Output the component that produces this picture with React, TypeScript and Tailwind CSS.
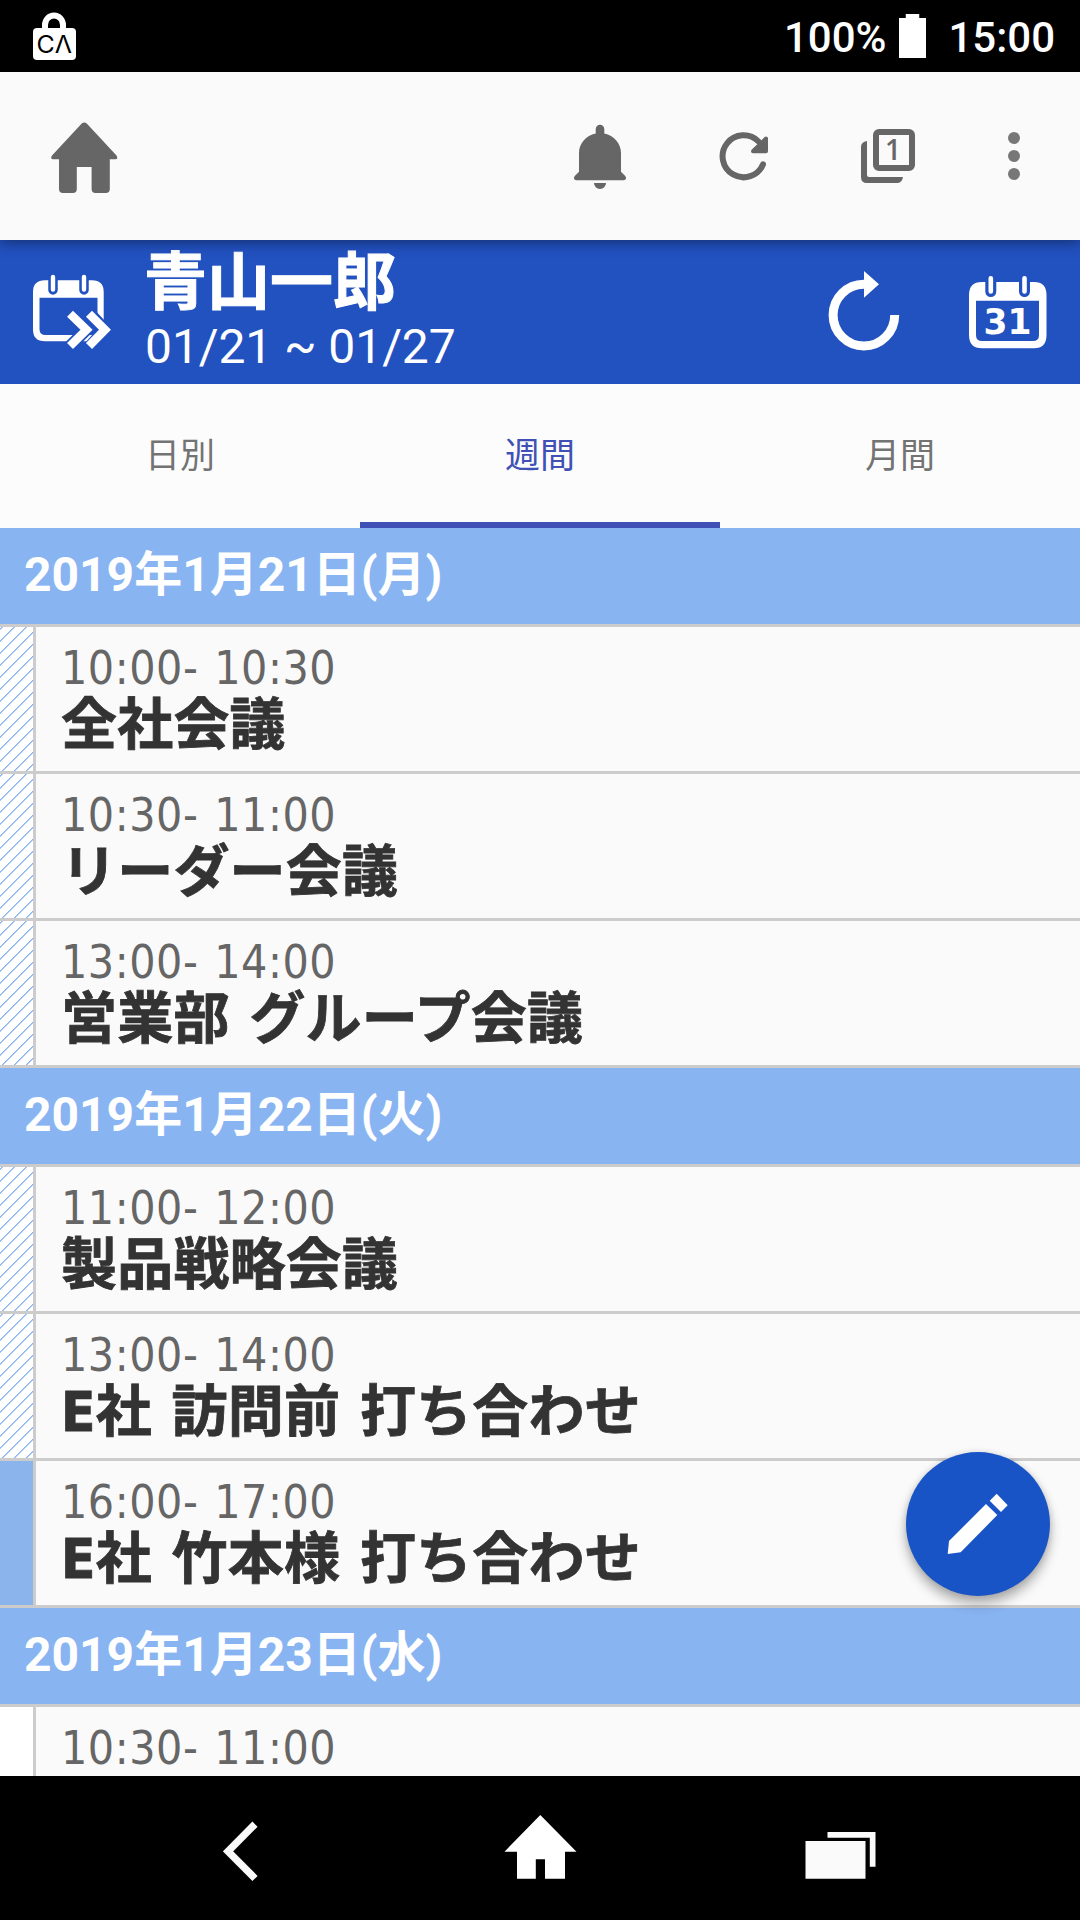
import clsx from "clsx"

type Kind = "striped" | "solid" | "empty"

interface Event {
    time: string
    title: string
    kind: Kind
}

interface Day {
    date: string
    events: Event[]
}

const days: Day[] = [
    {
        date: "2019年1月21日(月)",
        events: [
            { time: "10:00- 10:30", title: "全社会議", kind: "striped" },
            { time: "10:30- 11:00", title: "リーダー会議", kind: "striped" },
            { time: "13:00- 14:00", title: "営業部 グループ会議", kind: "striped" },
        ],
    },
    {
        date: "2019年1月22日(火)",
        events: [
            { time: "11:00- 12:00", title: "製品戦略会議", kind: "striped" },
            { time: "13:00- 14:00", title: "E社 訪問前 打ち合わせ", kind: "striped" },
            { time: "16:00- 17:00", title: "E社 竹本様 打ち合わせ", kind: "solid" },
        ],
    },
    {
        date: "2019年1月23日(水)",
        events: [{ time: "10:30- 11:00", title: "", kind: "empty" }],
    },
]

const tabs = ["日別", "週間", "月間"]

function StatusBar() {
    return (
        <div className="flex h-[72px] shrink-0 items-center bg-black pl-[33px] pr-[25px] font-['Roboto',sans-serif] text-[42px] font-medium text-white">
            <svg className="h-[48px] w-[43px]" viewBox="33 12 43 48">
                <path d="M45 30V25a9 9.5 0 0 1 18 0v5" fill="none" stroke="#fff" strokeWidth="6" />
                <rect x="33" y="28" width="43" height="32" rx="4" fill="#fff" />
                <text x="36.5" y="52.7" textLength="35.5" lengthAdjust="spacingAndGlyphs" fontFamily="Inter, sans-serif" fontWeight="400" fontSize="24" fill="#000">CΛ</text>
            </svg>
            <span className="ml-auto pt-[3px]">100%</span>
            <svg className="ml-[13px] mr-[22px] h-[44px] w-[27px]" viewBox="0 0 28 44" preserveAspectRatio="none">
                <path d="M0 4H7V0H21V4H28V44H0Z" fill="#fff" />
            </svg>
            <span className="pt-[3px]">15:00</span>
        </div>
    )
}

function AppBar() {
    return (
        <div className="relative z-10 flex h-[168px] shrink-0 items-center bg-[#fafafa] pl-[51px] pr-[60px] text-[#666] shadow-[0_3px_12px_rgba(0,0,0,0.4)]">
            <svg className="mt-[1px] h-[72px] w-[67px]" viewBox="51 120 67 72" fill="currentColor">
                <path d="M81.5 122.7Q84.3 120.500 87 122.700L116.500 154.500Q118.500 158.300 115.500 158.300H109.800V188Q109.800 192 105.800 192H95.600Q91.600 192 91.600 188V166H76.800V188Q76.800 192 72.800 192H63Q59 192 59 188V158.300H53Q50 158.300 52 154.500Z" />
            </svg>
            <svg className="ml-auto h-[66px] w-[52px]" viewBox="574 123 52 66" fill="currentColor">
                <path d="M595.700 129a4.300 4.300 0 0 1 8.600 0v4.500C614 135.500 621 143.500 621 153v18.700l4 4c2 2.300.8 4.600-1.500 4.600h-47c-2.300 0-3.500-2.300-1.500-4.600l4-4V153c0-9.500 7-17.500 16.700-19.500ZM594 183h12a6 6 0 0 1-12 0Z" />
            </svg>
            <svg className="ml-[93px] h-[50px] w-[50px]" viewBox="719 131 50 50">
                <path d="M758.500 141.500A21 21 0 1 0 763 164.300" fill="none" stroke="currentColor" strokeWidth="6" strokeLinecap="round" />
                <path d="M766 138.500V151.300H753Z" fill="currentColor" stroke="currentColor" strokeWidth="4" strokeLinejoin="round" />
            </svg>
            <svg className="ml-[92px] h-[54px] w-[54px]" viewBox="861 129 54 54">
                <rect x="876" y="132" width="36" height="36" rx="3" fill="none" stroke="currentColor" strokeWidth="6" />
                <path d="M861 147Q861 142 867 141V175Q867 177 869 177H903Q902 183 897 183H867Q861 183 861 177Z" fill="currentColor" />
                <text x="893" y="160" textAnchor="middle" fontFamily="Open Sans, sans-serif" fontWeight="600" fontSize="28" fill="currentColor">1</text>
            </svg>
            <svg className="ml-[93px] h-[48px] w-[12px] text-[#777]" viewBox="0 0 12 48" fill="currentColor">
                <circle cx="6" cy="6" r="6" />
                <circle cx="6" cy="24" r="6" />
                <circle cx="6" cy="42" r="6" />
            </svg>
        </div>
    )
}

function WeekHeader() {
    return (
        <div className="flex h-[144px] shrink-0 bg-[#2251c0] text-white">
            <svg className="ml-[32px] mt-[34px] h-[80px] w-[80px]" viewBox="32 274 80 80">
                <path fill="#fff" fillRule="evenodd" d="M45 280.300H92Q103.700 280.300 103.700 292V329.500Q103.700 341.300 92 341.300H45Q33 341.300 33 329.500V292Q33 280.300 45 280.300ZM39.500 297.700V329Q39.500 335 45.500 335H91.500Q97.500 335 97.500 329V297.700Z" />
                <path d="M53 278V290M84 278V290" stroke="#2251c0" strokeWidth="9.500" strokeLinecap="round" />
                <path d="M53 277V289.500M84 277V289.500" stroke="#fff" strokeWidth="4.400" strokeLinecap="round" />
                <path d="M66 309.700L86.500 329.700L66 350M86.500 309.700L105 329.700L86.500 350" fill="none" stroke="#2251c0" strokeWidth="12" />
                <path d="M70 313.700L86.500 329.700L70 346M89 313.700L105 329.700L89 346" fill="none" stroke="#fff" strokeWidth="8.500" />
            </svg>
            <div className="ml-[33px] pt-[5px]">
                <h1 className="ml-[-1px] font-['Noto_Sans_CJK_JP',sans-serif] text-[63px] font-bold leading-[64px] [-webkit-text-stroke:1px_#fff]">青山一郎</h1>
                <p className="font-['Roboto',sans-serif] text-[48px] leading-[75px] tracking-[-0.1px]">01/21 ~ 01/27</p>
            </div>
            <svg className="ml-auto mt-[30px] h-[82px] w-[72px]" viewBox="828 270 72 82">
                <path d="M864 284.300A30.800 30.800 0 1 0 894.700 315" fill="none" stroke="#fff" strokeWidth="9" />
                <path d="M864 271L879 284.300L864 297.700Z" fill="#fff" />
            </svg>
            <svg className="ml-[68px] mr-[33px] mt-[34px] h-[76px] w-[79px]" viewBox="968 274 79 76">
                <path fill="#fff" fillRule="evenodd" d="M982 282H1034Q1046.500 282 1046.500 295V335Q1046.500 348.300 1034 348.300H982Q969 348.300 969 335V295Q969 282 982 282ZM976 300.700V335Q976 341 982 341H1033Q1039 341 1039 335V300.700Z" />
                <path d="M990.800 279V291.500M1024.500 279V291.500" stroke="#2251c0" strokeWidth="11" strokeLinecap="round" />
                <path d="M990.800 278.300V291.500M1024.500 278.300V291.500" stroke="#fff" strokeWidth="4.600" strokeLinecap="round" />
                <text x="983.500" y="334.400" fontFamily="DejaVu Sans, sans-serif" fontWeight="700" fontSize="36" textLength="48" lengthAdjust="spacingAndGlyphs" fill="#fff">31</text>
            </svg>
        </div>
    )
}

function Tabs() {
    return (
        <div className="grid h-[144px] shrink-0 grid-cols-3 bg-[#fcfcfc] font-['Noto_Sans_CJK_JP',sans-serif] text-[35px]">
            {tabs.map((tab, i) => (
                <button
                    key={tab}
                    className={clsx(
                        "flex items-center justify-center border-b-[6px] pt-[1px]",
                        i === 1 ? "border-[#3f51b5] text-[#3f51b5]" : "border-transparent text-[#737373]"
                    )}
                >
                    {tab}
                </button>
            ))}
        </div>
    )
}

function EventRow({ time, title, kind }: Event) {
    return (
        <div className="flex h-[147px] border-b-[3px] border-[#ccc] bg-[#fafafa]">
            <div
                className={clsx(
                    "w-[36px] shrink-0 border-r-[3px] border-[#ccc]",
                    kind === "striped" && "bg-[repeating-linear-gradient(135deg,#fff_0,#fff_0.9px,#8ab4f0_1.1px,#8ab4f0_2px,#fff_2.4px,#fff_8.485px)]",
                    kind === "solid" && "bg-[#8cb4ec]",
                    kind === "empty" && "bg-white"
                )}
            />
            <div className="whitespace-nowrap pl-[25px] pt-[15px] font-['DejaVu_Sans_Condensed','DejaVu_Sans','Noto_Sans_CJK_JP',sans-serif] [font-stretch:condensed]">
                <p className="text-[46px] leading-[53px] tracking-[0.55px] text-[#666] [word-spacing:2px]">{time}</p>
                <p className="text-[56px] font-bold leading-[60px] tracking-[0.2px] text-[#333] [-webkit-text-stroke:0.8px_#333] [word-spacing:2px]">{title}</p>
            </div>
        </div>
    )
}

function NavBar() {
    return (
        <div className="flex h-[144px] shrink-0 items-center bg-black pl-[223px] pr-[204px]">
            <svg className="mt-[6px] h-[62px] w-[36px]" viewBox="223 1820 36 62">
                <path d="M255 1824.200L228 1851.300L255 1878.500" fill="none" stroke="#fafafa" strokeWidth="7.300" />
            </svg>
            <svg className="ml-[245px] mt-[-2px] h-[64px] w-[73px]" viewBox="504 1815 73 64">
                <path d="M540.300 1815L576.500 1851.700H565V1878.700H545V1859.300H535.800V1878.700H517V1851.700H504.500Z" fill="#fff" />
            </svg>
            <svg className="ml-auto mt-[14px] h-[47px] w-[71px]" viewBox="805.500 1832 71 47">
                <path d="M806 1841H866V1878.700H806ZM828 1832H876V1866.700H870.300V1837.700H828Z" fill="#fafafa" />
            </svg>
        </div>
    )
}

export default function App() {
    return (
        <div className="relative flex h-[1920px] w-[1080px] flex-col overflow-hidden bg-[#fafafa]">
            <StatusBar />
            <AppBar />
            <WeekHeader />
            <Tabs />
            <main className="min-h-0 flex-1 overflow-hidden">
                {days.map((day) => (
                    <section key={day.date}>
                        <h2 className="h-[99px] border-b-[3px] border-[#ccc] bg-[#89b4f2] pl-[24px] font-['Roboto','Noto_Sans_CJK_JP',sans-serif] text-[48px] font-bold leading-[94px] text-white">
                            {day.date}
                        </h2>
                        {day.events.map((event, i) => (
                            <EventRow key={i} {...event} />
                        ))}
                    </section>
                ))}
            </main>
            <NavBar />
            <button className="absolute right-[30px] top-[1452px] flex size-[144px] items-center justify-center rounded-full bg-[#1854c6] shadow-[0_8px_12px_rgba(0,0,0,0.3),0_0_6px_rgba(0,0,0,0.12)]">
                <svg className="size-[144px]" viewBox="906 1452 144 144" fill="#fff">
                    <path d="M986 1504L997.300 1515L960.700 1552.300L947.700 1554L949 1541ZM996.700 1493.700L1007.700 1505.300L1001 1512L989.700 1500.700Z" />
                </svg>
            </button>
        </div>
    )
}
